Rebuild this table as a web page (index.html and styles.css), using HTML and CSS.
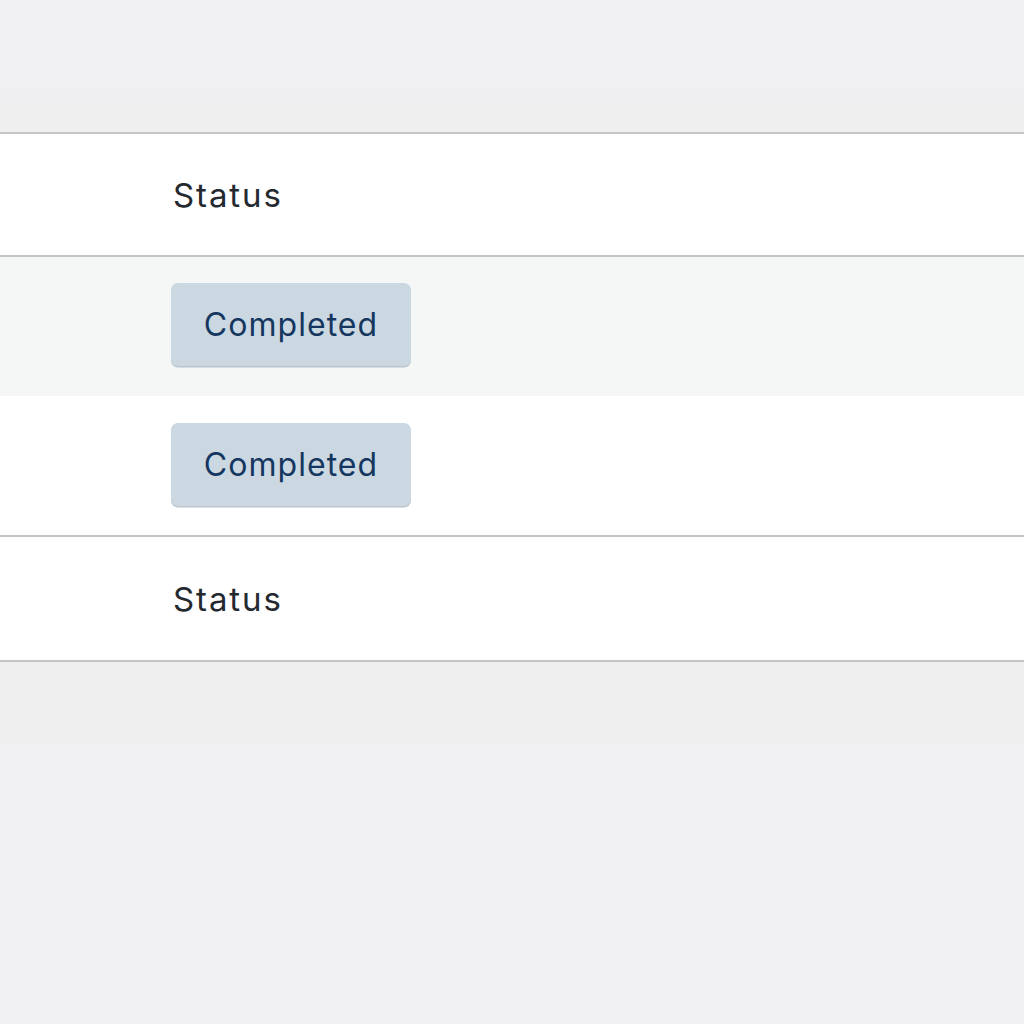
FILE: index.html
```html
<!DOCTYPE html>
<html>
<head>
<meta charset="utf-8">
<link rel="stylesheet" href="styles.css">
</head>
<body>
<div class="page">
  <div class="top"></div>
  <table class="grid">
    <thead>
      <tr><th class="col">Status</th></tr>
    </thead>
    <tbody>
      <tr class="row alt"><td class="col"><span class="badge">Completed</span></td></tr>
      <tr class="row"><td class="col"><span class="badge">Completed</span></td></tr>
    </tbody>
    <tfoot>
      <tr><th class="col">Status</th></tr>
    </tfoot>
  </table>
  <div class="bottom"></div>
</div>
</body>
</html>
```
FILE: styles.css
```css
html, body {
  margin: 0;
  padding: 0;
  background: #f0f0f2;
}
.page {
  width: 1024px;
  height: 1024px;
  overflow: hidden;
  display: flex;
  flex-direction: column;
}
.top {
  height: 132px;
  background: linear-gradient(#f0f0f2 0, #f0f0f2 88px, #efeff0 132px);
  flex: none;
}
.bottom {
  flex: 1;
  background: linear-gradient(#efefef 0, #efefef 70px, #f0f0f2 80px);
}
.grid {
  width: 100%;
  border-collapse: collapse;
  font-family: Inter, "Liberation Sans", sans-serif;
  flex: none;
}
.grid th, .grid td {
  padding: 0 0 0 173px;
  text-align: left;
}
.grid thead th,
.grid tfoot th {
  background: #ffffff;
  border-top: 2px solid #c5c5c9;
  border-bottom: 2px solid #c5c5c9;
  font-weight: 400;
  font-size: 33px;
  color: #24292f;
  letter-spacing: 1.9px;
}
.grid thead th {
  height: 121px;
}
.grid tfoot th {
  height: 123px;
}
.row td {
  height: 140px;
  background: #ffffff;
  padding-bottom: 2px;
  box-sizing: border-box;
}
.row.alt td {
  height: 140px;
  background: #f5f6f6;
  padding-bottom: 4px;
}
.grid td.col {
  padding-left: 171px;
}
.badge {
  display: inline-flex;
  align-items: center;
  justify-content: center;
  width: 240px;
  height: 83px;
  box-sizing: border-box;
  background: #cbd8e2;
  border-radius: 7px;
  box-shadow: 0 1.5px 0 #b9c6d0;
  color: #15375f;
  font-size: 32px;
  letter-spacing: 1.05px;
}
```
